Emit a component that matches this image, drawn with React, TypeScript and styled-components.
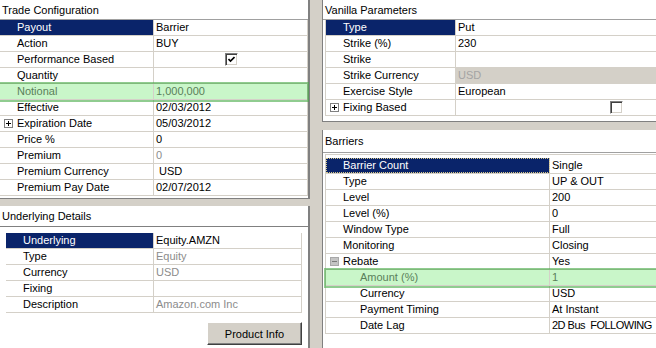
import styled, { createGlobalStyle, css } from "styled-components";

// property grids, two columns, clipped window on the right

type GridRow = {
  label: string;
  value?: string;
  selected?: boolean;
  focused?: boolean;
  muted?: boolean;
  shaded?: boolean;
  highlight?: boolean;
  tight?: boolean;
  expander?: "plus" | "minus";
  level?: number;
  check?: boolean;
};

const tradeRows: GridRow[] = [
  { label: "Payout", value: "Barrier", selected: true },
  { label: "Action", value: "BUY" },
  { label: "Performance Based", check: true },
  { label: "Quantity" },
  { label: "Notional", value: "1,000,000", highlight: true },
  { label: "Effective", value: "02/03/2012" },
  { label: "Expiration Date", value: "05/03/2012", expander: "plus" },
  { label: "Price %", value: "0" },
  { label: "Premium", value: "0", muted: true },
  { label: "Premium Currency", value: " USD" },
  { label: "Premium Pay Date", value: "02/07/2012" },
];

const underlyingRows: GridRow[] = [
  { label: "Underlying", value: "Equity.AMZN", selected: true },
  { label: "Type", value: "Equity", muted: true },
  { label: "Currency", value: "USD", muted: true },
  { label: "Fixing" },
  { label: "Description", value: "Amazon.com Inc", muted: true },
];

const vanillaRows: GridRow[] = [
  { label: "Type", value: "Put", selected: true },
  { label: "Strike (%)", value: "230" },
  { label: "Strike" },
  { label: "Strike Currency", value: "USD", muted: true, shaded: true },
  { label: "Exercise Style", value: "European" },
  { label: "Fixing Based", expander: "plus", check: false },
];

const barrierRows: GridRow[] = [
  { label: "Barrier Count", value: "Single", selected: true, focused: true },
  { label: "Type", value: "UP & OUT" },
  { label: "Level", value: "200" },
  { label: "Level (%)", value: "0" },
  { label: "Window Type", value: "Full" },
  { label: "Monitoring", value: "Closing" },
  { label: "Rebate", value: "Yes", expander: "minus" },
  { label: "Amount (%)", value: "1", level: 1, highlight: true },
  { label: "Currency", value: "USD", level: 1 },
  { label: "Payment Timing", value: "At Instant", level: 1 },
  { label: "Date Lag", value: "2D Bus  FOLLOWING", level: 1, tight: true },
];

function Expander({ open }: { open: boolean }) {
  return (
    <svg width="9" height="9" viewBox="0 0 9 9">
      <rect
        x="0.5"
        y="0.5"
        width="8"
        height="8"
        fill={open ? "#c4c4c4" : "#fff"}
        stroke={open ? "#a8a8a8" : "#808080"}
      />
      <path d="M2 4.5h5" stroke={open ? "#7a7a7a" : "#000"} />
      {!open && <path d="M4.5 2v5" stroke="#000" />}
    </svg>
  );
}

function CheckMark() {
  return (
    <svg width="7" height="7" viewBox="0 0 7 7">
      <path d="M0.5 3 L2.5 5 L6.5 1" fill="none" stroke="#000" strokeWidth="1.6" />
    </svg>
  );
}

function PropertyRow({ row, labelWidth }: { row: GridRow; labelWidth: number }) {
  const hasCheck = row.check !== undefined;
  return (
    <RowLine $labelWidth={labelWidth} $highlight={!!row.highlight}>
      <LabelCell
        $selected={!!row.selected}
        $focused={!!row.focused}
        $level={row.level ?? 0}
      >
        <ExpanderSlot>
          {row.expander && <Expander open={row.expander === "minus"} />}
        </ExpanderSlot>
        {row.label}
      </LabelCell>
      <ValueCell
        $muted={!!row.muted}
        $shaded={!!row.shaded}
        $tight={!!row.tight}
        $centered={hasCheck}
      >
        {hasCheck ? <CheckBox>{row.check && <CheckMark />}</CheckBox> : row.value}
      </ValueCell>
    </RowLine>
  );
}

export default function App() {
  return (
    <>
      <GlobalStyle />
      <Page>
        <LeftColumn>
          <TopLeftPanel>
            <PanelHeader $height={19} $line="#a0a0a0">
              Trade Configuration
            </PanelHeader>
            <TradeGrid>
              {tradeRows.map((r) => (
                <PropertyRow key={r.label} row={r} labelWidth={154} />
              ))}
            </TradeGrid>
          </TopLeftPanel>
          <BottomLeftPanel>
            <PanelHeader $height={20} $line="#808080">
              Underlying Details
            </PanelHeader>
            <UnderlyingGrid>
              {underlyingRows.map((r) => (
                <PropertyRow key={r.label} row={r} labelWidth={148} />
              ))}
            </UnderlyingGrid>
            <ButtonRow>
              <Button type="button">Product Info</Button>
            </ButtonRow>
          </BottomLeftPanel>
        </LeftColumn>
        <RightColumn>
          <TopRightPanel>
            <PanelHeader $height={19} $line="#a0a0a0">
              Vanilla Parameters
            </PanelHeader>
            <SideGrid>
              {vanillaRows.map((r) => (
                <PropertyRow key={r.label} row={r} labelWidth={130} />
              ))}
            </SideGrid>
          </TopRightPanel>
          <BottomRightPanel>
            <PanelHeader $height={22} $line="#a0a0a0">
              Barriers
            </PanelHeader>
            <BarrierGrid>
              {barrierRows.map((r) => (
                <PropertyRow key={r.label} row={r} labelWidth={224} />
              ))}
            </BarrierGrid>
          </BottomRightPanel>
        </RightColumn>
      </Page>
    </>
  );
}

const GlobalStyle = createGlobalStyle`
  html, body {
    margin: 0;
    padding: 0;
    background: #d4d0c8;
  }
  body {
    font-family: "Liberation Sans", Arial, sans-serif;
    font-size: 11px;
    color: #000;
  }
`;

const Page = styled.div`
  display: flex;
  width: 656px;
  height: 348px;
  overflow: hidden;
  background: #d4d0c8;
`;

const LeftColumn = styled.div`
  display: flex;
  flex-direction: column;
  gap: 7px;
  width: 310px;
  flex-shrink: 0;
`;

const RightColumn = styled.div`
  display: flex;
  flex-direction: column;
  gap: 8px;
  width: 452px;
  flex-shrink: 0;
  margin-left: 12px;
`;

const Panel = styled.div`
  background: #fff;
  box-sizing: border-box;
`;

const TopLeftPanel = styled(Panel)`
  height: 199px;
  border-right: 2px solid #808080;
  border-bottom: 1px solid #808080;
`;

const BottomLeftPanel = styled(Panel)`
  flex: 1;
  border-right: 2px solid #808080;
`;

const TopRightPanel = styled(Panel)`
  height: 122px;
  border-left: 1px solid #808080;
  border-bottom: 1px solid #808080;
`;

const BottomRightPanel = styled(Panel)`
  flex: 1;
  border-left: 1px solid #808080;
`;

const PanelHeader = styled.div<{ $height: number; $line: string }>`
  display: flex;
  align-items: center;
  height: ${(p) => p.$height}px;
  padding-left: 2px;
  border-bottom: 1px solid ${(p) => p.$line};
`;

const Grid = styled.div`
  display: flex;
  flex-direction: column;
`;

const TradeGrid = styled(Grid)`
  border-right: 1px solid #d4d0c8;
`;

const UnderlyingGrid = styled(Grid)`
  margin: 6px 6px 0;
  border-right: 1px solid #d4d0c8;
`;

const SideGrid = styled(Grid)`
  margin-left: 2px;
  border-left: 1px solid #d4d0c8;
`;

const BarrierGrid = styled(SideGrid)`
  margin-top: 1px;
  border-top: 1px solid #d4d0c8;
  padding-top: 3px;
`;

const RowLine = styled.div<{ $labelWidth: number; $highlight: boolean }>`
  display: grid;
  grid-template-columns: ${(p) => p.$labelWidth}px 1fr;
  height: 16px;
  box-sizing: border-box;
  border-bottom: 1px solid #d4d0c8;
  line-height: 15px;
  white-space: pre;
  ${(p) =>
    p.$highlight &&
    css`
      position: relative;
      z-index: 1;
      background: #c9f6c9;
      color: #5a7f5a;
      outline: 2px solid rgba(70, 170, 70, 0.6);
    `}
`;

const LabelCell = styled.div<{ $selected: boolean; $focused: boolean; $level: number }>`
  display: flex;
  align-items: center;
  box-sizing: border-box;
  padding-left: ${(p) => p.$level * 17}px;
  border-right: 1px solid #d4d0c8;
  overflow: hidden;
  ${(p) =>
    p.$selected &&
    css`
      background: #0a246a;
      color: #fff;
    `}
  ${(p) =>
    p.$focused &&
    css`
      outline: 1px dotted #d8c888;
      outline-offset: -1px;
    `}
`;

const ExpanderSlot = styled.span`
  display: flex;
  align-items: center;
  justify-content: center;
  width: 17px;
  height: 15px;
  flex-shrink: 0;
`;

const ValueCell = styled.div<{
  $muted: boolean;
  $shaded: boolean;
  $tight: boolean;
  $centered: boolean;
}>`
  display: flex;
  align-items: center;
  justify-content: ${(p) => (p.$centered ? "center" : "flex-start")};
  padding-left: 2px;
  overflow: hidden;
  ${(p) => p.$muted && css`color: #8c8c8c;`}
  ${(p) => p.$shaded && css`background: #d4d0c8; color: #a4a4a4;`}
  ${(p) => p.$tight && css`letter-spacing: -0.5px;`}
`;

const CheckBox = styled.span`
  display: inline-flex;
  align-items: center;
  justify-content: center;
  width: 13px;
  height: 13px;
  box-sizing: border-box;
  background: #fff;
  border: 1px solid;
  border-color: #808080 #fff #fff #808080;
  box-shadow: inset 1px 1px #404040, inset -1px -1px #d4d0c8;
`;

const ButtonRow = styled.div`
  display: flex;
  justify-content: flex-end;
  padding: 9px 6px 0 0;
`;

const Button = styled.button`
  width: 95px;
  height: 23px;
  padding: 0;
  font: 11px "Liberation Sans", Arial, sans-serif;
  color: #000;
  background: #d4d0c8;
  border: 1px solid;
  border-color: #fff #404040 #404040 #fff;
  box-shadow: inset -1px -1px #808080, inset 1px 1px #d4d0c8;
`;
